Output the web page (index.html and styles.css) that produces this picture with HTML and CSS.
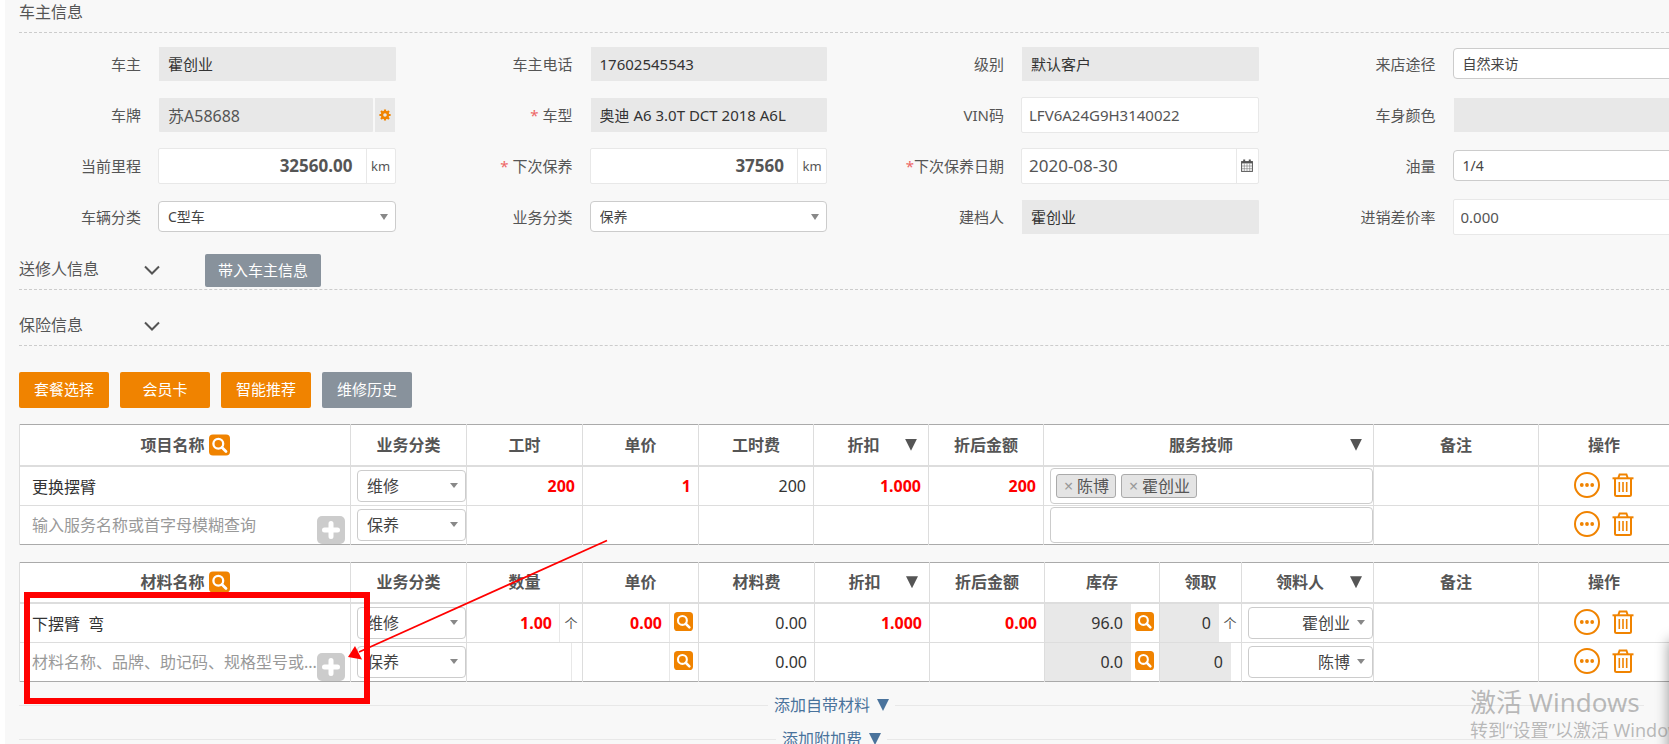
FILE: index.html
```
<!DOCTYPE html>
<html lang="zh-CN">
<head>
<meta charset="utf-8">
<title>车主信息</title>
<link rel="stylesheet" href="styles.css">
</head>
<body>
<svg class="sprite" aria-hidden="true">
  <symbol id="i-search" viewBox="0 0 21 21"><rect width="21" height="21" rx="4" fill="#f08300"/><circle cx="9.3" cy="9.3" r="4.9" fill="none" stroke="#fff" stroke-width="2.3"/><path d="M13 13l4 4" stroke="#fff" stroke-width="2.8" stroke-linecap="round"/></symbol>
  <symbol id="i-plus" viewBox="0 0 28 28"><rect width="28" height="28" rx="5" fill="#ccc"/><path d="M14 7.500v13M7.500 14h13" stroke="#fff" stroke-width="5" stroke-linecap="round"/></symbol>
  <symbol id="i-more" viewBox="0 0 26 26"><circle cx="13" cy="13" r="12" fill="none" stroke="#f08300" stroke-width="2"/><circle cx="7.8" cy="13" r="1.9" fill="#f08300"/><circle cx="13" cy="13" r="1.9" fill="#f08300"/><circle cx="18.2" cy="13" r="1.9" fill="#f08300"/></symbol>
  <symbol id="i-trash" viewBox="0 0 22 24"><g fill="none" stroke="#f08300"><path d="M.5 5.3h21" stroke-width="2"/><path d="M6.3 5L7.6 1.400h6.800L15.700 5" stroke-width="2"/><path d="M3 5.500v16q0 1.500 1.500 1.500h13q1.500 0 1.500-1.500v-16" stroke-width="2"/><path d="M7.300 9v10M11 9v10M14.700 9v10" stroke-width="1.600"/></g></symbol>
  <symbol id="i-chev" viewBox="0 0 16 11"><path d="M1 1.500l7 7 7-7" fill="none" stroke="#555" stroke-width="2"/></symbol>
  <symbol id="i-gear" viewBox="0 0 12 12"><circle cx="6" cy="6" r="3" fill="none" stroke="#f08300" stroke-width="2.400"/><path d="M6 .4v2M6 9.600v2M.4 6h2M9.600 6h2M2 2l1.400 1.400M8.600 8.600L10 10M2 10l1.400-1.400M8.600 3.400L10 2" stroke="#f08300" stroke-width="2.200"/></symbol>
  <symbol id="i-cal" viewBox="0 0 12 13"><rect x=".6" y="2.600" width="10.800" height="9.800" fill="none" stroke="#555" stroke-width="1"/><path d="M.6 3.500h10.800" stroke="#555" stroke-width="1.800"/><path d="M3.200.5v2.500M8.800.5v2.500" stroke="#555" stroke-width="2"/><path d="M.6 7h10.800M.6 9.700h10.800M3.300 4.500v8M6 4.500v8M8.700 4.500v8" stroke="#777" stroke-width=".6"/></symbol>
</svg>

<main class="page">
  <h2 class="section-title">车主信息</h2>

  <form class="form-grid">
    <div class="field"><label for="owner">车主</label><input class="box locked" id="owner" value="霍创业" readonly></div>
    <div class="field"><label for="phone">车主电话</label><input class="box locked" id="phone" value="17602545543" readonly></div>
    <div class="field"><label for="level">级别</label><input class="box locked" id="level" value="默认客户" readonly></div>
    <div class="field"><label for="source">来店途径</label><span class="pick"><select id="source"><option>自然来访</option></select></span></div>

    <div class="field"><label for="plate">车牌</label><span class="group plate"><input class="locked" id="plate" value="苏A58688" readonly><button type="button" class="addon gear" aria-label="车牌设置"><svg width="12" height="12"><use href="#i-gear"/></svg></button></span></div>
    <div class="field"><label for="model"><i>* </i>车型</label><input class="box locked" id="model" value="奥迪 A6 3.0T DCT 2018 A6L" readonly></div>
    <div class="field"><label for="vin">VIN码</label><input class="box open" id="vin" value="LFV6A24G9H3140022"></div>
    <div class="field"><label for="color">车身颜色</label><input class="box locked" id="color" value="" readonly></div>

    <div class="field"><label for="mileage">当前里程</label><span class="group"><input class="strong" id="mileage" value="32560.00"><span class="addon">km</span></span></div>
    <div class="field"><label for="next"><i>* </i>下次保养</label><span class="group"><input class="strong" id="next" value="37560"><span class="addon">km</span></span></div>
    <div class="field"><label for="date"><i>*</i>下次保养日期</label><span class="group"><input class="date" id="date" value="2020-08-30"><button type="button" class="addon cal" aria-label="选择日期"><svg width="12" height="13"><use href="#i-cal"/></svg></button></span></div>
    <div class="field"><label for="oil">油量</label><span class="pick"><select id="oil"><option>1/4</option></select></span></div>

    <div class="field"><label for="cartype">车辆分类</label><span class="pick"><select id="cartype"><option>C型车</option></select></span></div>
    <div class="field"><label for="biz">业务分类</label><span class="pick"><select id="biz"><option>保养</option></select></span></div>
    <div class="field"><label for="creator">建档人</label><input class="box locked" id="creator" value="霍创业" readonly></div>
    <div class="field"><label for="margin">进销差价率</label><input class="box open" id="margin" value="0.000"></div>
  </form>

  <div class="fold fold-sender"><h2>送修人信息</h2><button type="button" class="chev" aria-label="展开送修人信息"><svg width="16" height="11"><use href="#i-chev"/></svg></button><button type="button" class="btn grey import">带入车主信息</button></div>
  <div class="fold fold-insurance"><h2>保险信息</h2><button type="button" class="chev" aria-label="展开保险信息"><svg width="16" height="11"><use href="#i-chev"/></svg></button></div>

  <div class="actions">
    <button type="button" class="btn">套餐选择</button>
    <button type="button" class="btn">会员卡</button>
    <button type="button" class="btn">智能推荐</button>
    <button type="button" class="btn grey">维修历史</button>
  </div>

  <table class="sheet">
    <colgroup><col class="c-name"><col class="c-std"><col class="c-std"><col class="c-std"><col class="c-fee"><col class="c-fee"><col class="c-fee"><col class="c-tech"><col class="c-note"><col></colgroup>
    <thead><tr>
      <th><span class="with-icon">项目名称<button type="button" class="icon" aria-label="查询项目"><svg width="21" height="22"><use href="#i-search"/></svg></button></span></th>
      <th>业务分类</th><th>工时</th><th>单价</th><th>工时费</th>
      <th><span class="menu-head"><span>折扣</span><button type="button" class="tri" aria-label="折扣菜单"></button></span></th>
      <th>折后金额</th>
      <th><span class="menu-head"><span>服务技师</span><button type="button" class="tri" aria-label="技师菜单"></button></span></th>
      <th>备注</th><th>操作</th>
    </tr></thead>
    <tbody>
      <tr>
        <td><div class="cell"><input class="name" aria-label="项目名称" value="更换摆臂"></div></td>
        <td><div class="cell inset"><span class="pick small"><select aria-label="业务分类"><option>维修</option></select></span></div></td>
        <td><div class="cell"><input class="num red" aria-label="工时" value="200"></div></td>
        <td><div class="cell"><input class="num red" aria-label="单价" value="1"></div></td>
        <td><div class="cell"><input class="num" aria-label="工时费" value="200"></div></td>
        <td><div class="cell"><input class="num red" aria-label="折扣" value="1.000"></div></td>
        <td><div class="cell"><input class="num red" aria-label="折后金额" value="200"></div></td>
        <td><div class="cell inset"><div class="tags"><span class="tag"><button type="button" aria-label="移除陈博">×</button>陈博</span><span class="tag"><button type="button" aria-label="移除霍创业">×</button>霍创业</span></div></div></td>
        <td></td>
        <td><div class="ops"><button type="button" aria-label="更多"><svg width="26" height="26"><use href="#i-more"/></svg></button><button type="button" aria-label="删除"><svg width="22" height="24"><use href="#i-trash"/></svg></button></div></td>
      </tr>
      <tr>
        <td><div class="cell"><input class="name" aria-label="项目名称" placeholder="输入服务名称或首字母模糊查询"><button type="button" class="add" aria-label="添加项目"><svg width="28" height="28"><use href="#i-plus"/></svg></button></div></td>
        <td><div class="cell inset"><span class="pick small"><select aria-label="业务分类"><option>保养</option></select></span></div></td>
        <td></td><td></td><td></td><td></td><td></td>
        <td><div class="cell inset"><div class="tags"></div></div></td>
        <td></td>
        <td><div class="ops"><button type="button" aria-label="更多"><svg width="26" height="26"><use href="#i-more"/></svg></button><button type="button" aria-label="删除"><svg width="22" height="24"><use href="#i-trash"/></svg></button></div></td>
      </tr>
    </tbody>
  </table>

  <table class="sheet">
    <colgroup><col class="c-name"><col class="c-std"><col class="c-std"><col class="c-std"><col class="c-std"><col class="c-fee"><col class="c-fee"><col class="c-fee"><col class="c-take"><col class="c-person"><col class="c-note"><col></colgroup>
    <thead><tr>
      <th><span class="with-icon">材料名称<button type="button" class="icon" aria-label="查询材料"><svg width="21" height="22"><use href="#i-search"/></svg></button></span></th>
      <th>业务分类</th><th>数量</th><th>单价</th><th>材料费</th>
      <th><span class="menu-head"><span>折扣</span><button type="button" class="tri" aria-label="折扣菜单"></button></span></th>
      <th>折后金额</th><th>库存</th><th>领取</th>
      <th><span class="menu-head"><span>领料人</span><button type="button" class="tri" aria-label="领料人菜单"></button></span></th>
      <th>备注</th><th>操作</th>
    </tr></thead>
    <tbody>
      <tr>
        <td><div class="cell"><input class="name" aria-label="材料名称" value="下摆臂&nbsp; 弯"></div></td>
        <td><div class="cell inset"><span class="pick small"><select aria-label="业务分类"><option>维修</option></select></span></div></td>
        <td><div class="cell"><input class="num red" aria-label="数量" value="1.00"><span class="unit">个</span></div></td>
        <td><div class="cell"><input class="num red" aria-label="单价" value="0.00"><span class="side"><button type="button" class="icon" aria-label="查询单价"><svg width="19" height="19"><use href="#i-search"/></svg></button></span></div></td>
        <td><div class="cell"><input class="num" aria-label="材料费" value="0.00"></div></td>
        <td><div class="cell"><input class="num red" aria-label="折扣" value="1.000"></div></td>
        <td><div class="cell"><input class="num red" aria-label="折后金额" value="0.00"></div></td>
        <td><div class="cell"><input class="num off" aria-label="库存" value="96.0" readonly><span class="side"><button type="button" class="icon" aria-label="查询库存"><svg width="19" height="19"><use href="#i-search"/></svg></button></span></div></td>
        <td><div class="cell"><input class="num off" aria-label="领取" value="0" readonly><span class="unit">个</span></div></td>
        <td><div class="cell inset"><span class="pick small right"><select aria-label="领料人"><option>霍创业</option></select></span></div></td>
        <td></td>
        <td><div class="ops"><button type="button" aria-label="更多"><svg width="26" height="26"><use href="#i-more"/></svg></button><button type="button" aria-label="删除"><svg width="22" height="24"><use href="#i-trash"/></svg></button></div></td>
      </tr>
      <tr>
        <td><div class="cell"><input class="name" aria-label="材料名称" placeholder="材料名称、品牌、助记码、规格型号或..."><button type="button" class="add" aria-label="添加材料"><svg width="28" height="28"><use href="#i-plus"/></svg></button></div></td>
        <td><div class="cell inset"><span class="pick small"><select aria-label="业务分类"><option>保养</option></select></span></div></td>
        <td><div class="cell"><input class="num red" aria-label="数量" value=""><span class="unit blank"></span></div></td>
        <td><div class="cell"><input class="num red" aria-label="单价" value=""><span class="side"><button type="button" class="icon" aria-label="查询单价"><svg width="19" height="19"><use href="#i-search"/></svg></button></span></div></td>
        <td><div class="cell"><input class="num" aria-label="材料费" value="0.00"></div></td>
        <td></td><td></td>
        <td><div class="cell"><input class="num off" aria-label="库存" value="0.0" readonly><span class="side"><button type="button" class="icon" aria-label="查询库存"><svg width="19" height="19"><use href="#i-search"/></svg></button></span></div></td>
        <td><div class="cell"><input class="num off" aria-label="领取" value="0" readonly><span class="unit blank"></span></div></td>
        <td><div class="cell inset"><span class="pick small right"><select aria-label="领料人"><option>陈博</option></select></span></div></td>
        <td></td>
        <td><div class="ops"><button type="button" aria-label="更多"><svg width="26" height="26"><use href="#i-more"/></svg></button><button type="button" aria-label="删除"><svg width="22" height="24"><use href="#i-trash"/></svg></button></div></td>
      </tr>
    </tbody>
  </table>

  <div class="more first"><a href="#own">添加自带材料<b class="tri blue"></b></a></div>
  <div class="more"><a href="#fee">添加附加费<b class="tri blue"></b></a></div>
</main>

<div class="marker"></div>
<svg class="arrow" width="262" height="124" viewBox="0 0 262 124"><path d="M260 1.500L12 113" stroke="#f00" stroke-width="1.800" fill="none"/><path d="M1 118L8 107L15 120.500z" fill="#f00"/></svg>
<aside class="drawer"></aside>
<div class="watermark"><p class="wm-title">激活 Windows</p><p class="wm-text">转到“设置”以激活 Windows。</p></div>
</body>
</html>
```
FILE: styles.css
```
* { box-sizing: border-box; }
body {
  position: relative;
  margin: 0;
  height: 100vh;
  overflow: hidden;
  background: #fff;
  color: #555;
  font: 15px/24px "Noto Sans", "Noto Sans CJK SC", sans-serif;
}
input, select, button { font: inherit; color: inherit; margin: 0; }
button { padding: 0; border: 0; background: none; cursor: pointer; }
input { min-width: 0; border: 0; outline: 0; background: transparent; }
svg { display: block; }
h2, p { margin: 0; font-weight: 400; }
.sprite { position: absolute; width: 0; height: 0; }

.page { margin-left: 5px; padding-left: 14px; min-height: 100vh; background: #f8f8f8; }
.section-title { font-size: 16px; line-height: 24px; padding-bottom: 8px; border-bottom: 1px dashed #ccc; }

.form-grid {
  display: grid;
  grid-template-columns: repeat(4, minmax(0, 1fr));
  grid-auto-rows: 51px;
  margin-right: -76px;
  padding-top: 5px;
}
.field { display: grid; grid-template-columns: 122px minmax(0, 1fr); column-gap: 17px; align-items: center; padding-right: 55px; }
.field label { text-align: right; white-space: nowrap; }
.field label i { font-style: normal; color: #e66; }
.box { width: 100%; }
.locked { height: 34px; background: #e8e8e8; color: #333; padding: 0 9px; border-radius: 1px; }
.box.locked { border: 0 solid #f8f8f8; border-left-width: 1px; }
.open { height: 36px; padding: 0 7px; background: #fff; border: 1px solid #e8e8e8; border-radius: 2px; }
.group { display: flex; height: 36px; background: #fff; border: 1px solid #e8e8e8; border-radius: 2px; }
.group input { flex: 1; padding: 0 7px; }
.group .strong { text-align: right; font-weight: 700; font-size: 17px; padding-right: 13px; }
.group .date { font-size: 17px; }
.addon { display: flex; align-items: center; justify-content: center; width: 29px; border-left: 1px solid #e8e8e8; font-size: 13px; }
.addon.cal { width: 22px; }
.group.plate { height: 34px; border-width: 0 1px; border-color: #f8f8f8; background: #f8f8f8; gap: 2px; }
.group.plate .locked { font-size: 16px; color: #555; padding: 0 9px; }
.addon.gear { width: 20px; background: #e8e8e8; border: 0; }

.pick { position: relative; display: block; flex: 1; }
.pick select {
  display: block;
  width: 100%;
  height: 31px;
  padding: 0 9px;
  appearance: none;
  border: 1px solid #ccc;
  border-radius: 4px;
  background: #fff;
  color: #444;
  font-size: 14px;
}
.pick::after {
  content: "";
  position: absolute;
  right: 8px;
  top: 13px;
  border: 4px solid transparent;
  border-top: 6px solid #888;
  border-bottom: 0;
}
.pick.small select { height: 32px; font-size: 16px; }
.pick.small::after { border-top-width: 5px; }
.pick.right select { text-align: right; text-align-last: right; padding-right: 22px; }

.fold { display: flex; align-items: center; padding-bottom: 2px; border-bottom: 1px dashed #ccc; }
.fold h2 { width: 125px; padding-bottom: 2px; font-size: 16px; line-height: 31px; }
.fold-sender { margin-top: 12px; }
.fold-insurance { margin-top: 20px; padding-bottom: 2px; }
.btn { width: 90px; height: 36px; padding-bottom: 2px; border-radius: 2px; background: #f08300; color: #fff; }
.btn.grey { background: #88929c; }
.btn.import { width: 116px; height: 33px; margin-left: 45px; }
.actions { display: flex; gap: 11px; margin: 26px 0 16px; }

.sheet { width: 100%; table-layout: fixed; border-collapse: collapse; margin-bottom: 17px; background: #fff; border-top: 1px solid #aaa; border-bottom: 1px solid #aaa; font-size: 16px; }
.c-name { width: 331px; }
.c-std { width: 116px; }
.c-fee { width: 115px; }
.c-tech { width: 330px; }
.c-take { width: 82px; }
.c-person { width: 132px; }
.c-note { width: 165px; }
.sheet th { height: 41px; padding: 0; font-weight: 700; border-bottom: 2px solid #ddd; }
.sheet th, .sheet td { border-left: 1px solid #ddd; }
.sheet td { height: 39px; padding: 0; color: #333; }
.sheet tbody tr + tr td { border-top: 1px solid #ddd; }
.with-icon { display: flex; align-items: center; justify-content: center; gap: 4px; }
.menu-head { display: flex; align-items: center; padding: 0 11px 0 8px; }
.menu-head span { flex: 1; }
.tri { width: 12px; height: 12px; background: #555; clip-path: polygon(0 0, 100% 0, 50% 100%); }
.tri.blue { display: inline-block; margin-left: 7px; background: #4a739c; }

.cell { display: flex; align-items: center; height: 38px; }
.cell.inset { padding-left: 6px; }
.name { flex: 1; height: 38px; padding: 0 0 0 12px; }
.name::placeholder { color: #999; opacity: 1; }
.add { align-self: flex-end; margin-right: 5px; }
.num { flex: 1; width: 0; height: 38px; padding: 0 7px; text-align: right; }
.red { color: #f00; font-weight: 700; }
.off { background: #e8e8e8; }
.unit { display: flex; align-items: center; justify-content: center; width: 23px; height: 38px; border-left: 1px solid #e8e8e8; font-size: 13px; color: #555; }
.unit.blank { width: 11px; }
.side { display: flex; align-items: center; width: 29px; height: 38px; padding: 0 0 3px 4px; border-left: 1px solid #e8e8e8; }
.tags { display: flex; flex: 1; align-items: center; gap: 5px; height: 36px; padding-left: 5px; border: 1px solid #ccc; border-radius: 4px; }
.tag { display: flex; align-items: center; height: 24px; padding: 0 6px 0 7px; border: 1px solid #aaa; border-radius: 3px; background: #e4e4e4; color: #555; }
.tag button { width: 13px; text-align: left; color: #999; }
.ops { display: flex; align-items: center; justify-content: center; gap: 12px; padding-bottom: 2px; }

.more { display: flex; align-items: center; gap: 6px; margin-right: 25px; height: 34px; }
.more.first { margin-top: -11px; }
.more::before, .more::after { content: ""; flex: 1; height: 1px; background: #e8e8e8; }
.more a { font-size: 16px; color: #4a739c; text-decoration: none; }

.marker { position: absolute; left: 24px; top: 592px; width: 346px; height: 112px; border: 6px solid #f00; }
.arrow { position: absolute; left: 347px; top: 539px; }
.drawer { position: absolute; left: 100%; top: 640px; width: 40px; height: 200px; box-shadow: 0 0 14px rgba(0, 0, 0, 0.4); }
.watermark { position: absolute; left: 1470px; top: 684px; color: rgba(120, 120, 120, 0.5); white-space: nowrap; }
.wm-title { font-size: 26px; line-height: 36px; }
.wm-text { font-size: 18px; line-height: 20px; }
```
